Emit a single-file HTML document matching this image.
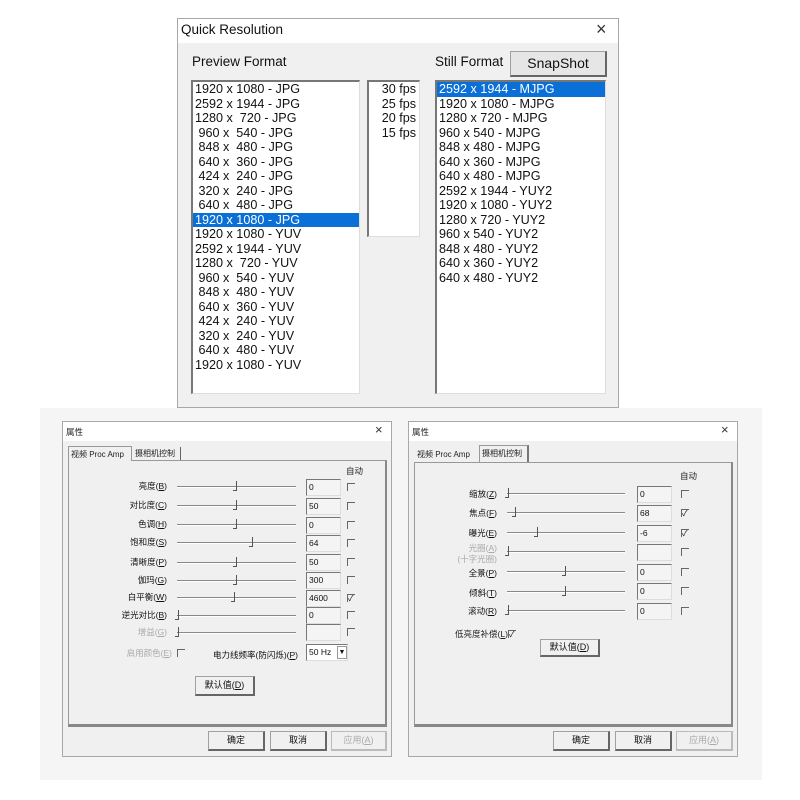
<!DOCTYPE html>
<html><head><meta charset="utf-8">
<style>
*{margin:0;padding:0;box-sizing:border-box}
body{width:800px;height:800px;background:#fff;position:relative;overflow:hidden;font-family:"Liberation Sans","Noto Sans CJK SC",sans-serif;color:#111}
.a{position:absolute;white-space:nowrap}
.dlg{position:absolute;background:#f0f0f0;border:1px solid #a8a8a8}
.tb{position:absolute;left:0;right:0;top:0;background:#fff}
.list{position:absolute;background:#fff;border-top:2px solid #777;border-left:2px solid #777;border-right:1px solid #ddd;border-bottom:1px solid #ddd;font-size:12.6px;line-height:14.5px}
.list div{padding-left:2px;white-space:pre}
.sel{background:#0a6fd6;color:#fff}
.btn{position:absolute;background:#f0f0f0;border:1px solid #a0a0a0;border-right:2px solid #666;border-bottom:2px solid #666;font-size:9px;text-align:center;white-space:nowrap}
.s{font-size:8.5px;color:#222}
.g{color:#aaa}
.lbl{position:absolute;text-align:right;font-size:8.5px;white-space:nowrap}
.trk{position:absolute;height:2px;border-top:1px solid #888;border-bottom:1px solid #fff}
.th{position:absolute;width:4px;height:10px;border-right:1px solid #555;border-bottom:1px solid #555}
.ed{position:absolute;height:17px;background:#f4f4f4;border-top:1px solid #777;border-left:1px solid #777;border-right:1px solid #ddd;border-bottom:1px solid #ddd;font-size:8.5px;padding:2px 2px}
.cb{position:absolute;width:8px;height:8px;border-top:1px solid #666;border-left:1px solid #666;font-size:8px;line-height:8px}
</style></head><body>
<div class="a" style="left:40px;top:408px;width:722px;height:372px;background:#f5f5f5"></div>

<div class="dlg" style="left:177px;top:18px;width:442px;height:390px">
 <div class="tb" style="height:24px"></div>
 <div class="a" style="left:3px;top:3px;font-size:13.5px">Quick Resolution</div>
 <div class="a" style="left:418px;top:0px;font-size:18px;color:#333">×</div>
 <div class="a" style="left:14px;top:35px;font-size:13.5px">Preview Format</div>
 <div class="a" style="left:257px;top:35px;font-size:13.5px">Still Format</div>
 <div class="btn" style="left:332px;top:32px;width:97px;height:26px;font-size:14px;line-height:22px;background:#e6e6e6">SnapShot</div>
</div>
<div class="list" style="left:191px;top:80px;width:169px;height:314px"><div>1920 x 1080 - JPG</div><div>2592 x 1944 - JPG</div><div>1280 x  720 - JPG</div><div> 960 x  540 - JPG</div><div> 848 x  480 - JPG</div><div> 640 x  360 - JPG</div><div> 424 x  240 - JPG</div><div> 320 x  240 - JPG</div><div> 640 x  480 - JPG</div><div class="sel">1920 x 1080 - JPG</div><div>1920 x 1080 - YUV</div><div>2592 x 1944 - YUV</div><div>1280 x  720 - YUV</div><div> 960 x  540 - YUV</div><div> 848 x  480 - YUV</div><div> 640 x  360 - YUV</div><div> 424 x  240 - YUV</div><div> 320 x  240 - YUV</div><div> 640 x  480 - YUV</div><div>1920 x 1080 - YUV</div></div>
<div class="list" style="left:367px;top:80px;width:53px;height:157px;text-align:right"><div style="padding-right:3px">30 fps</div><div style="padding-right:3px">25 fps</div><div style="padding-right:3px">20 fps</div><div style="padding-right:3px">15 fps</div></div>
<div class="list" style="left:435px;top:80px;width:171px;height:314px"><div class="sel">2592 x 1944 - MJPG</div><div>1920 x 1080 - MJPG</div><div>1280 x 720 - MJPG</div><div>960 x 540 - MJPG</div><div>848 x 480 - MJPG</div><div>640 x 360 - MJPG</div><div>640 x 480 - MJPG</div><div>2592 x 1944 - YUY2</div><div>1920 x 1080 - YUY2</div><div>1280 x 720 - YUY2</div><div>960 x 540 - YUY2</div><div>848 x 480 - YUY2</div><div>640 x 360 - YUY2</div><div>640 x 480 - YUY2</div></div>

<div class="dlg" style="left:62px;top:421px;width:330px;height:336px">
 <div class="tb" style="height:19px"></div>
 <div class="a s" style="left:3px;top:4px">属性</div>
 <div class="a" style="left:312px;top:0px;font-size:13px;color:#333">×</div>
 <div class="a" style="left:5px;top:38px;width:319px;height:266px;border:1px solid #999;border-right:2px solid #888;border-bottom:2px solid #888;background:#f0f0f0"></div>
 <div class="a s" style="left:5px;top:24px;height:15px;width:64px;border:1px solid #999;border-bottom:none;background:#f0f0f0;padding:2px 2px;font-size:8px">视频 Proc Amp</div>
 <div class="a s" style="left:70px;top:25px;height:13px;width:48px;border-right:1px solid #666;padding:1px 2px;font-size:8px">摄相机控制</div>
 <div class="a" style="left:5px;top:304px;width:319px;border-top:1px solid #888"></div>
</div>
<div class="a s" style="left:346px;top:465px">自动</div>
<div class="lbl" style="left:80px;width:87px;top:480px">亮度(<u>B</u>)</div><div class="trk" style="left:177px;width:119px;top:486px"></div><div class="th" style="left:233px;top:481px"></div><div class="ed" style="left:306px;top:479px;width:35px">0</div><div class="cb" style="left:347px;top:483px"></div>
<div class="lbl" style="left:80px;width:87px;top:499px">对比度(<u>C</u>)</div><div class="trk" style="left:177px;width:119px;top:505px"></div><div class="th" style="left:233px;top:500px"></div><div class="ed" style="left:306px;top:498px;width:35px">50</div><div class="cb" style="left:347px;top:502px"></div>
<div class="lbl" style="left:80px;width:87px;top:518px">色调(<u>H</u>)</div><div class="trk" style="left:177px;width:119px;top:524px"></div><div class="th" style="left:233px;top:519px"></div><div class="ed" style="left:306px;top:517px;width:35px">0</div><div class="cb" style="left:347px;top:521px"></div>
<div class="lbl" style="left:80px;width:87px;top:536px">饱和度(<u>S</u>)</div><div class="trk" style="left:177px;width:119px;top:542px"></div><div class="th" style="left:249px;top:537px"></div><div class="ed" style="left:306px;top:535px;width:35px">64</div><div class="cb" style="left:347px;top:539px"></div>
<div class="lbl" style="left:80px;width:87px;top:556px">清晰度(<u>P</u>)</div><div class="trk" style="left:177px;width:119px;top:562px"></div><div class="th" style="left:233px;top:557px"></div><div class="ed" style="left:306px;top:554px;width:35px">50</div><div class="cb" style="left:347px;top:558px"></div>
<div class="lbl" style="left:80px;width:87px;top:574px">伽玛(<u>G</u>)</div><div class="trk" style="left:177px;width:119px;top:580px"></div><div class="th" style="left:233px;top:575px"></div><div class="ed" style="left:306px;top:572px;width:35px">300</div><div class="cb" style="left:347px;top:576px"></div>
<div class="lbl" style="left:80px;width:87px;top:591px">白平衡(<u>W</u>)</div><div class="trk" style="left:177px;width:119px;top:597px"></div><div class="th" style="left:231px;top:592px"></div><div class="ed" style="left:306px;top:590px;width:35px">4600</div><div class="cb" style="left:347px;top:594px">✓</div>
<div class="lbl" style="left:80px;width:87px;top:609px">逆光对比(<u>B</u>)</div><div class="trk" style="left:177px;width:119px;top:615px"></div><div class="th" style="left:175px;top:610px"></div><div class="ed" style="left:306px;top:607px;width:35px">0</div><div class="cb" style="left:347px;top:611px"></div>
<div class="lbl g" style="left:80px;width:87px;top:626px">增益(<u>G</u>)</div><div class="trk" style="left:177px;width:119px;top:632px"></div><div class="th" style="left:175px;top:627px"></div><div class="ed" style="left:306px;top:624px;width:35px"></div><div class="cb" style="left:347px;top:628px"></div>
<div class="lbl g" style="left:100px;width:72px;top:647px">启用颜色(<u>E</u>)</div><div class="cb" style="left:177px;top:649px"></div>
<div class="lbl" style="left:200px;width:98px;top:649px">电力线频率(防闪烁)(<u>P</u>)</div>
<div class="ed" style="left:306px;top:644px;width:42px;background:#fff">50 Hz</div><div class="a" style="left:337px;top:646px;width:10px;height:13px;border:1px solid #999;font-size:7px;text-align:center;line-height:12px">▼</div>
<div class="btn" style="left:195px;top:676px;width:60px;height:20px;line-height:17px">默认值(<u>D</u>)</div>
<div class="btn" style="left:208px;top:731px;width:57px;height:20px;line-height:17px">确定</div>
<div class="btn" style="left:270px;top:731px;width:57px;height:20px;line-height:17px">取消</div>
<div class="btn g" style="left:331px;top:731px;width:56px;height:20px;line-height:17px;border-color:#bbb">应用(<u>A</u>)</div>

<div class="dlg" style="left:408px;top:421px;width:330px;height:336px">
 <div class="tb" style="height:19px"></div>
 <div class="a s" style="left:3px;top:4px">属性</div>
 <div class="a" style="left:312px;top:0px;font-size:13px;color:#333">×</div>
 <div class="a" style="left:5px;top:40px;width:319px;height:264px;border:1px solid #999;border-right:2px solid #888;border-bottom:2px solid #888;background:#f0f0f0"></div>
 <div class="a s" style="left:8px;top:27px;font-size:8px">视频 Proc Amp</div>
 <div class="a s" style="left:70px;top:23px;height:17px;width:50px;border:1px solid #999;border-right:2px solid #777;border-bottom:none;background:#f0f0f0;padding:2px 2px;font-size:8px">摄相机控制</div>
 <div class="a" style="left:5px;top:304px;width:319px;border-top:1px solid #888"></div>
</div>
<div class="a s" style="left:680px;top:470px">自动</div>
<div class="lbl" style="left:420px;width:77px;top:488px">缩放(<u>Z</u>)</div><div class="trk" style="left:507px;width:118px;top:493px"></div><div class="th" style="left:505px;top:488px"></div><div class="ed" style="left:637px;top:486px;width:35px">0</div><div class="cb" style="left:681px;top:490px"></div>
<div class="lbl" style="left:420px;width:77px;top:507px">焦点(<u>F</u>)</div><div class="trk" style="left:507px;width:118px;top:512px"></div><div class="th" style="left:512px;top:507px"></div><div class="ed" style="left:637px;top:505px;width:35px">68</div><div class="cb" style="left:681px;top:509px">✓</div>
<div class="lbl" style="left:420px;width:77px;top:527px">曝光(<u>E</u>)</div><div class="trk" style="left:507px;width:118px;top:532px"></div><div class="th" style="left:534px;top:527px"></div><div class="ed" style="left:637px;top:525px;width:35px">-6</div><div class="cb" style="left:681px;top:529px">✓</div>
<div class="lbl g" style="left:420px;width:77px;top:543px;line-height:11px">光圈(<u>A</u>)<br>(十字光圈)</div><div class="trk" style="left:507px;width:118px;top:551px"></div><div class="th" style="left:505px;top:546px"></div><div class="ed" style="left:637px;top:544px;width:35px"></div><div class="cb" style="left:681px;top:548px"></div>
<div class="lbl" style="left:420px;width:77px;top:567px">全景(<u>P</u>)</div><div class="trk" style="left:507px;width:118px;top:571px"></div><div class="th" style="left:562px;top:566px"></div><div class="ed" style="left:637px;top:564px;width:35px">0</div><div class="cb" style="left:681px;top:568px"></div>
<div class="lbl" style="left:420px;width:77px;top:587px">倾斜(<u>T</u>)</div><div class="trk" style="left:507px;width:118px;top:591px"></div><div class="th" style="left:562px;top:586px"></div><div class="ed" style="left:637px;top:583px;width:35px">0</div><div class="cb" style="left:681px;top:587px"></div>
<div class="lbl" style="left:420px;width:77px;top:605px">滚动(<u>R</u>)</div><div class="trk" style="left:507px;width:118px;top:610px"></div><div class="th" style="left:505px;top:605px"></div><div class="ed" style="left:637px;top:603px;width:35px">0</div><div class="cb" style="left:681px;top:607px"></div>
<div class="a s" style="left:455px;top:628px">低亮度补偿(<u>L</u>)</div><div class="cb" style="left:508px;top:630px">✓</div>
<div class="btn" style="left:540px;top:639px;width:60px;height:18px;line-height:15px">默认值(<u>D</u>)</div>
<div class="btn" style="left:553px;top:731px;width:57px;height:20px;line-height:17px">确定</div>
<div class="btn" style="left:615px;top:731px;width:57px;height:20px;line-height:17px">取消</div>
<div class="btn g" style="left:676px;top:731px;width:57px;height:20px;line-height:17px;border-color:#bbb">应用(<u>A</u>)</div>
</body></html>
